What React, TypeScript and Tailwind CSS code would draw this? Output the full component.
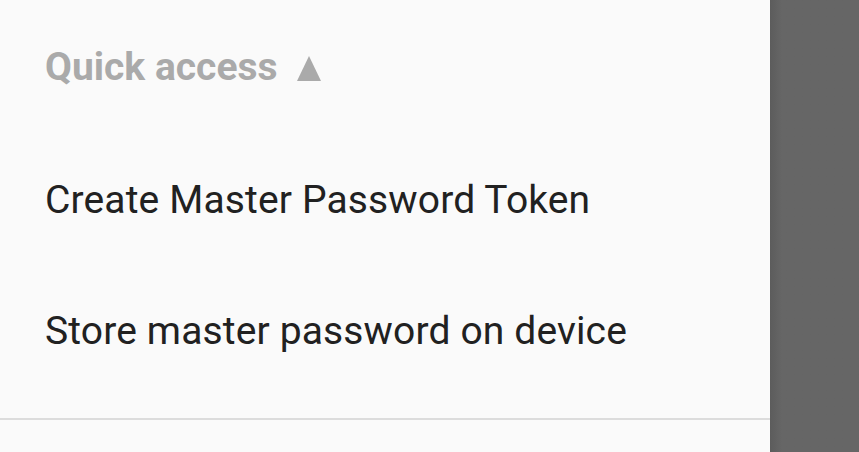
export default function App() {
  return (
    <div className="flex h-[452px] w-[859px] overflow-hidden bg-[#666666] font-['Roboto',sans-serif]">
      <div className="flex w-[770px] flex-col bg-[#fafafa]">
        <div className="flex h-[135px] shrink-0 items-center px-[45px] text-[39px] font-bold text-[#aaaaaa]">
          Quick access
          <svg width="24" height="25" viewBox="0 0 24 25" className="ml-[19px] mt-[2px]">
            <path d="M12 0 L24 25 L0 25 Z" fill="#aaaaaa" />
          </svg>
        </div>
        <div className="flex h-[131px] shrink-0 items-center px-[45px] text-[39px] tracking-[0.14px] text-[#212121]">
          Create Master Password Token
        </div>
        <div className="flex h-[131px] shrink-0 items-center px-[45px] text-[39px] tracking-[0.14px] text-[#212121]">
          Store master password on device
        </div>
        <div className="mt-[21px] h-[2px] shrink-0 bg-[#dcdcdc]" />
      </div>
      <div className="flex-1 bg-gradient-to-r from-[#5c5c5c] to-[#666666] to-[12px]" />
    </div>
  );
}
